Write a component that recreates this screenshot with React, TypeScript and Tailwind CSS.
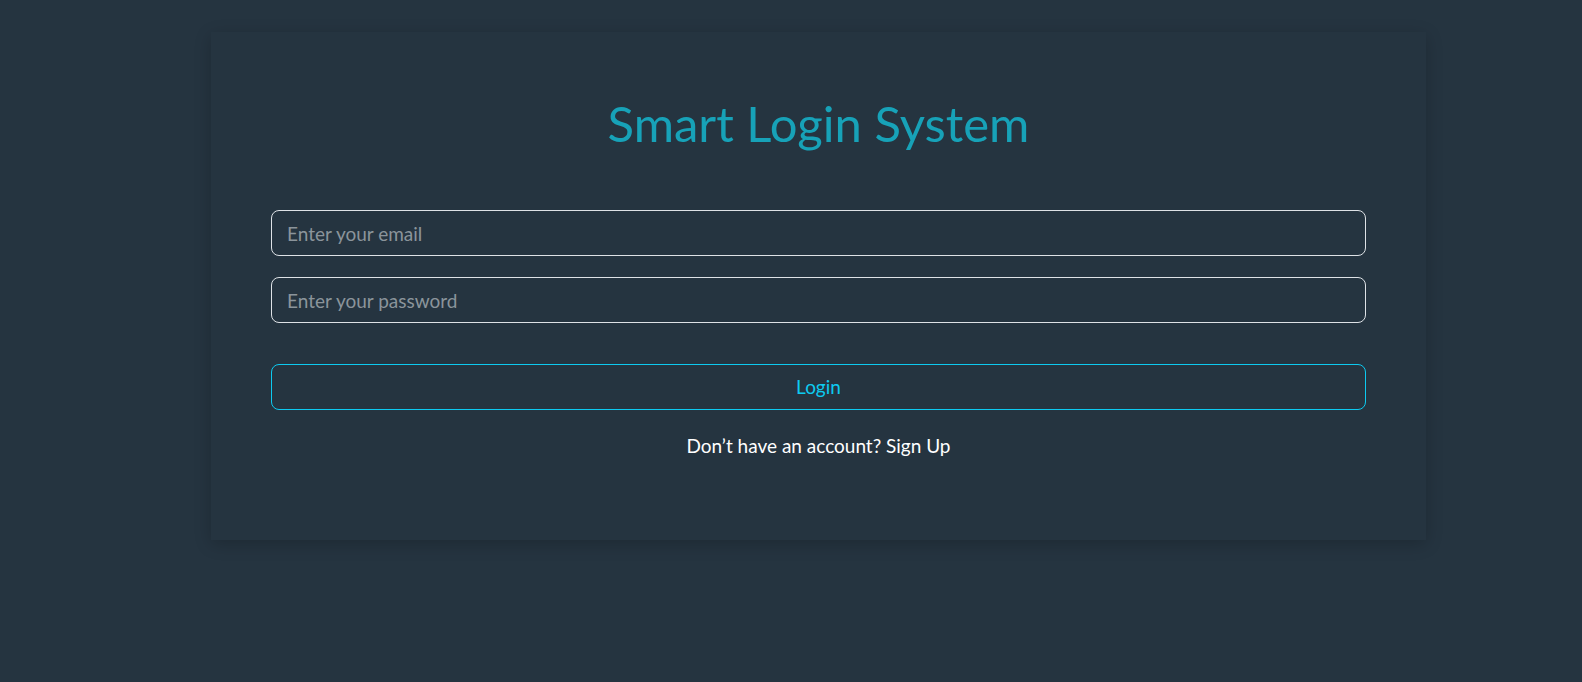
export default function App() {
  return (
    <div className="min-h-[682px] w-full bg-[#253440] pt-[32px] font-['Lato','Open_Sans',sans-serif]">
      <div className="ml-[211px] w-[1215px] bg-[#253440] px-[60px] pt-[62px] pb-[80px] shadow-[0_4px_16px_rgba(0,0,0,0.2)]">
        <h1 className="text-center text-[49px] leading-[58px] font-normal text-[#17a2b8]">
          Smart Login System
        </h1>
        <form className="mt-[58px] flex flex-col" onSubmit={(e) => e.preventDefault()}>
          <input
            type="email"
            placeholder="Enter your email"
            className="h-[46px] w-full rounded-[8px] border border-[#dee2e6] bg-transparent px-[15px] text-[19px] text-white outline-none placeholder:text-[#8b949b]"
          />
          <input
            type="password"
            placeholder="Enter your password"
            className="mt-[21px] h-[46px] w-full rounded-[8px] border border-[#dee2e6] bg-transparent px-[15px] text-[19px] text-white outline-none placeholder:text-[#8b949b]"
          />
          <button
            type="submit"
            className="mt-[41px] h-[46px] w-full rounded-[8px] border border-[#0dcaf0] bg-transparent text-[19px] text-[#0dcaf0]"
          >
            Login
          </button>
        </form>
        <p className="mt-[22px] text-center text-[19px] leading-[28px] text-white">
          Don’t have an account? Sign Up
        </p>
      </div>
    </div>
  );
}
